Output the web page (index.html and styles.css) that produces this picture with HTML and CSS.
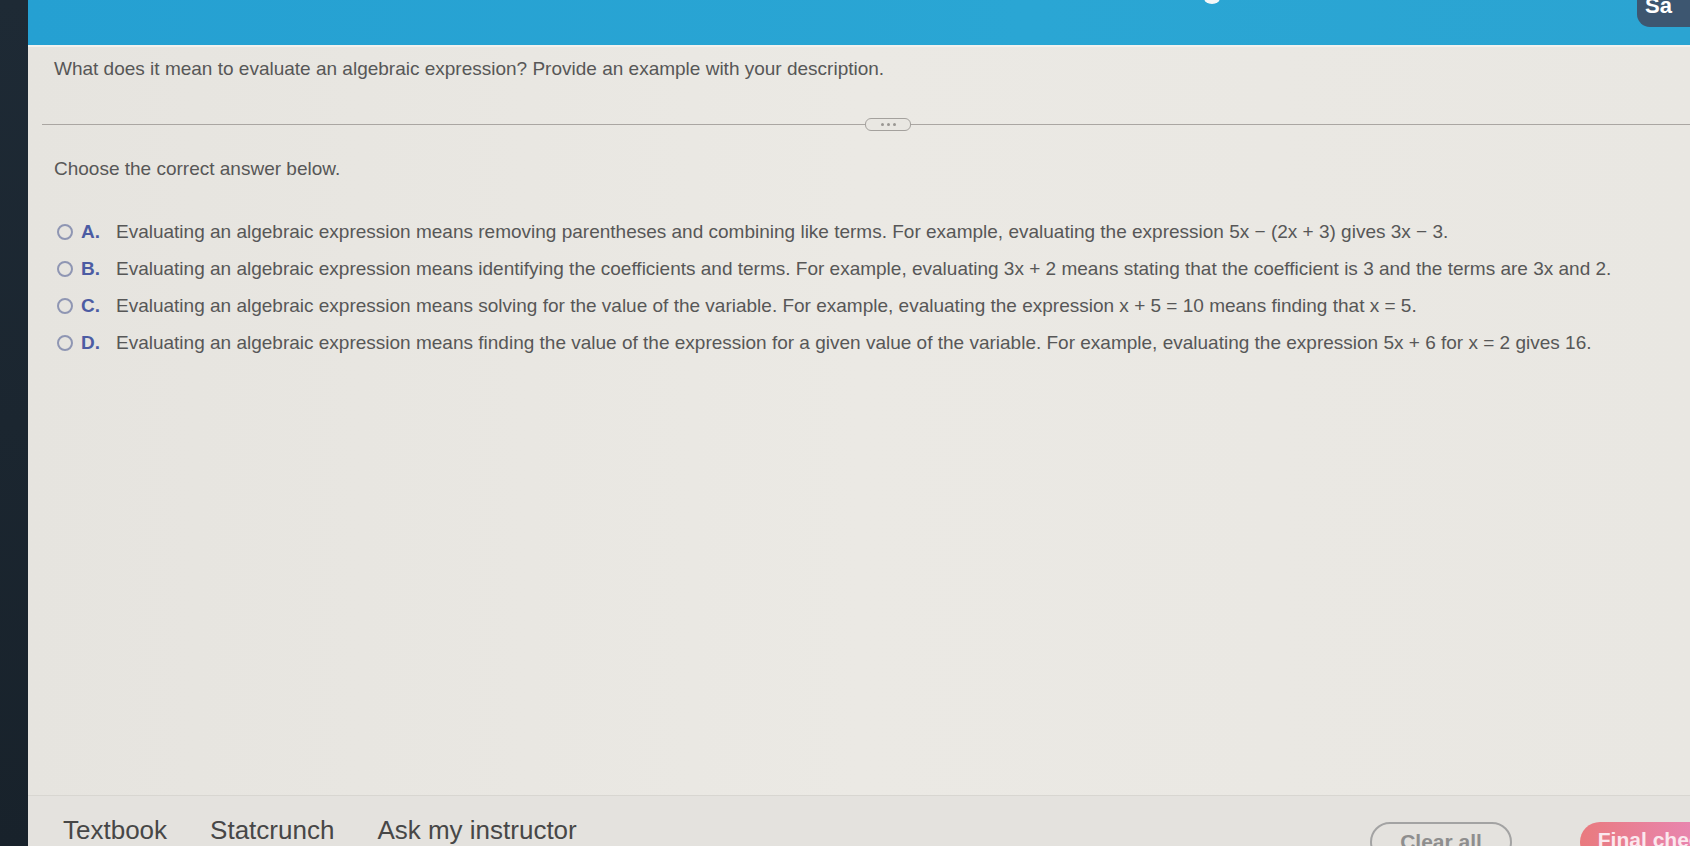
FILE: index.html
```html
<!DOCTYPE html>
<html>
<head>
<meta charset="utf-8">
<link rel="stylesheet" href="styles.css">
</head>
<body>
<div class="frame">
  <div class="strip"></div>
  <div class="main">
    <header class="topbar">
      <span class="dot"></span>
      <div class="save">Sa</div>
    </header>
    <section class="content">
      <p class="question">What does it mean to evaluate an algebraic expression? Provide an example with your description.</p>
      <div class="sep"><span class="line"></span><span class="pill"><i></i><i></i><i></i></span><span class="line"></span></div>
      <p class="prompt">Choose the correct answer below.</p>
      <ul class="options">
        <li><span class="radio"></span><b>A.</b><span class="txt">Evaluating an algebraic expression means removing parentheses and combining like terms. For example, evaluating the expression 5x − (2x + 3) gives 3x − 3.</span></li>
        <li><span class="radio"></span><b>B.</b><span class="txt">Evaluating an algebraic expression means identifying the coefficients and terms. For example, evaluating 3x + 2 means stating that the coefficient is 3 and the terms are 3x and 2.</span></li>
        <li><span class="radio"></span><b>C.</b><span class="txt">Evaluating an algebraic expression means solving for the value of the variable. For example, evaluating the expression x + 5 = 10 means finding that x = 5.</span></li>
        <li><span class="radio"></span><b>D.</b><span class="txt">Evaluating an algebraic expression means finding the value of the expression for a given value of the variable. For example, evaluating the expression 5x + 6 for x = 2 gives 16.</span></li>
      </ul>
    </section>
    <footer class="toolbar">
      <nav class="links">
        <a>Textbook</a>
        <a>Statcrunch</a>
        <a>Ask my instructor</a>
      </nav>
      <div class="buttons">
        <span class="btn clear">Clear all</span>
        <span class="btn final">Final check</span>
      </div>
    </footer>
  </div>
</div>
</body>
</html>
```

FILE: styles.css
```css
html, body {
  margin: 0;
  padding: 0;
  width: 1690px;
  height: 846px;
  overflow: hidden;
  font-family: "Liberation Sans", Arial, sans-serif;
}
.frame {
  display: flex;
  width: 1690px;
  height: 846px;
  background: #e9e7e2;
}
.strip {
  width: 28px;
  flex: none;
  background: linear-gradient(180deg, #1e2a35, #18222b);
}
.main {
  flex: 1;
  display: flex;
  flex-direction: column;
  min-width: 0;
  background: linear-gradient(90deg, #e6e4df 0%, #ebe9e4 50%, #e9e7e2 100%);
}
.topbar {
  height: 45px;
  flex: none;
  background: linear-gradient(90deg, #25a0d2, #2aa6d4 60%, #2ba4d2);
  position: relative;
  border-bottom: 2px solid #f2f1ee;
}
.dot {
  position: absolute;
  left: 1176px;
  top: -8px;
  width: 16px;
  height: 12px;
  border-radius: 50%;
  background: #f4f7f8;
}
.save {
  position: absolute;
  right: 0;
  top: 0;
  width: 45px;
  height: 27px;
  padding-left: 8px;
  background: #3d5670;
  border-bottom-left-radius: 13px;
  color: #fff;
  font-weight: bold;
  font-size: 22px;
  line-height: 12px;
  overflow: hidden;
}
.content {
  flex: 1;
  padding: 10px 0 0 26px;
  color: #5a5a5a;
}
.question {
  margin: 0;
  font-size: 19px;
  line-height: 24px;
  color: #575757;
}
.sep {
  display: flex;
  align-items: center;
  margin: 36px 0 0 -12px;
  height: 14px;
}
.sep .line {
  height: 1px;
  background: #aaa6a2;
}
.sep .line:first-child {
  width: 823px;
  flex: none;
}
.sep .line:last-child {
  flex: 1;
}
.pill {
  width: 44px;
  height: 11px;
  border: 1.5px solid #a4a19d;
  border-radius: 6px;
  display: flex;
  justify-content: center;
  align-items: center;
  gap: 3px;
  background: #e9e7e2;
  flex: none;
}
.pill i {
  width: 3px;
  height: 3px;
  border-radius: 50%;
  background: #9a9793;
}
.prompt {
  margin: 26px 0 0;
  font-size: 19px;
  line-height: 24px;
  color: #575757;
}
.options {
  list-style: none;
  margin: 39px 0 0;
  padding: 0 0 0 3px;
  display: flex;
  flex-direction: column;
  gap: 13px;
}
.options li {
  display: flex;
  align-items: center;
  height: 24px;
  font-size: 19px;
  color: #575757;
  white-space: nowrap;
}
.radio {
  width: 12px;
  height: 12px;
  border: 2px solid #8f96b3;
  border-radius: 50%;
  flex: none;
  margin-right: 8px;
}
.options b {
  color: #4c5ca3;
  font-weight: bold;
  width: 35px;
  flex: none;
}
.toolbar {
  height: 50px;
  flex: none;
  border-top: 1px solid #d8d6d1;
  background: #e4e2de;
  display: flex;
  justify-content: space-between;
  align-items: flex-start;
  padding: 0 0 0 35px;
  overflow: hidden;
}
.links {
  display: flex;
  gap: 43px;
  margin-top: 19px;
}
.links a {
  font-size: 26px;
  color: #474747;
  line-height: 30px;
}
.buttons {
  display: flex;
  gap: 68px;
  margin-top: 26px;
}
.btn {
  display: block;
  height: 40px;
  border-radius: 20px;
  font-size: 21px;
  font-weight: bold;
  line-height: 36px;
  text-align: center;
  box-sizing: border-box;
}
.clear {
  width: 142px;
  border: 2px solid #a3a3a3;
  color: #8e8e8e;
}
.final {
  width: 150px;
  margin-right: -40px;
  background: linear-gradient(90deg, #e97a7e, #e889c0);
  color: #fbe8ee;
}
```
